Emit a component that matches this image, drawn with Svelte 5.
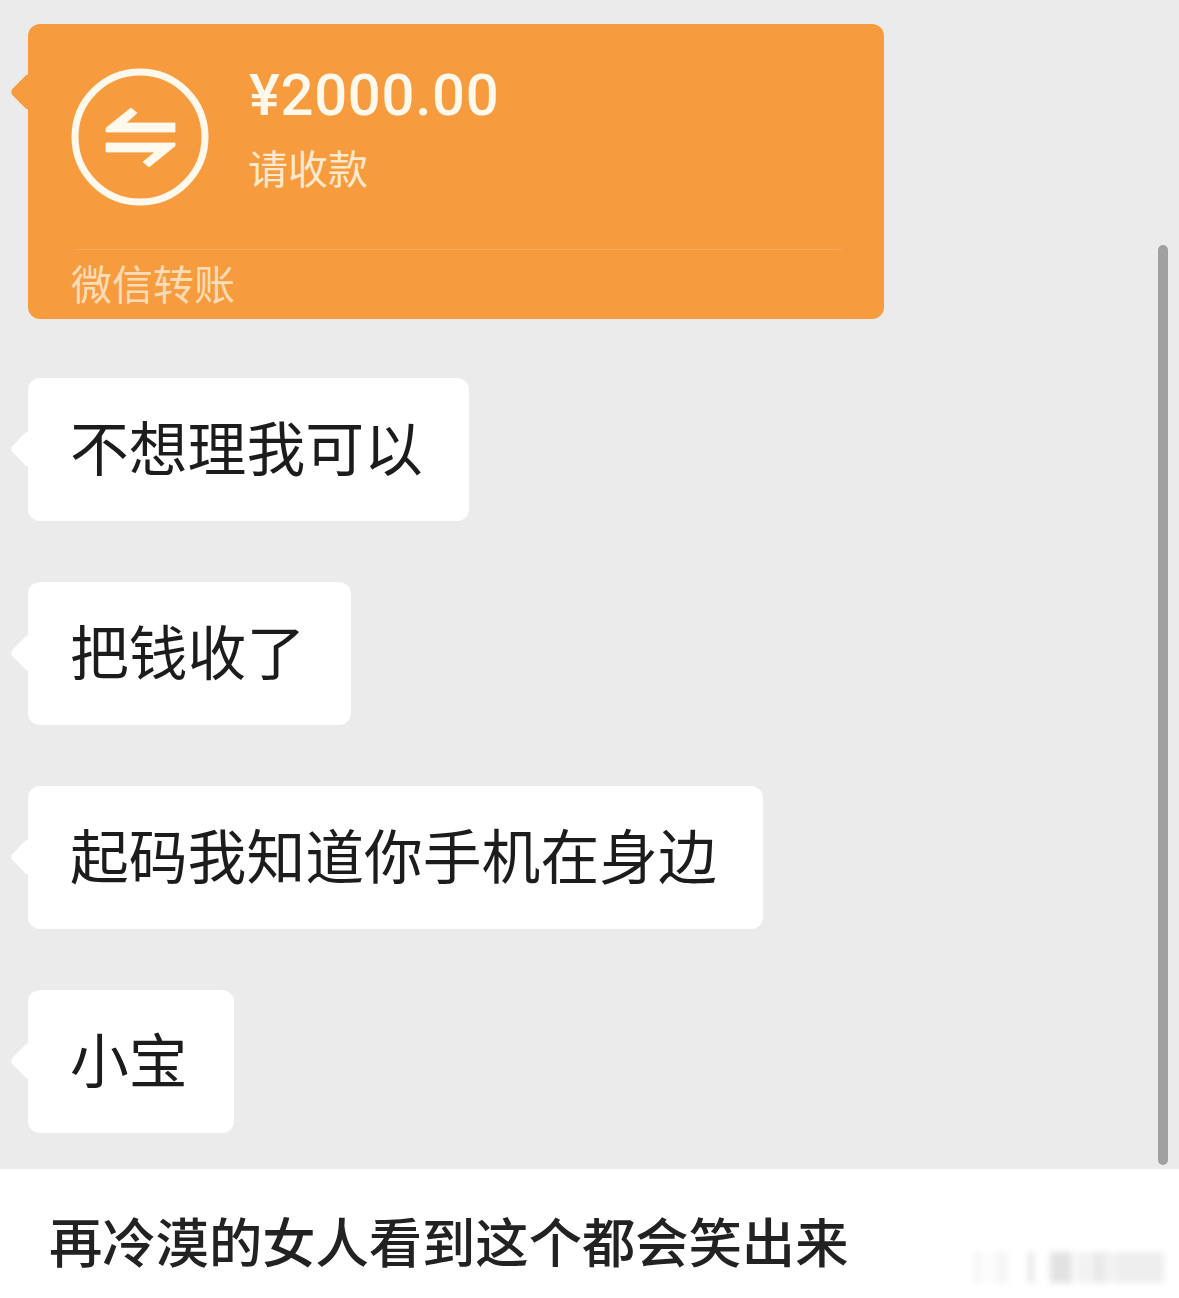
<script>
  const messages = ['不想理我可以', '把钱收了', '起码我知道你手机在身边', '小宝'];
</script>

<div class="page">
  <main class="chat">
    <article class="transfer">
      <div class="transfer-main">
        <svg class="transfer-icon" viewBox="0 0 138 138" aria-hidden="true">
          <circle cx="69" cy="69" r="65" fill="none" stroke="#fff8ec" stroke-width="7" />
          <path d="M35 64 L35 60 L60 40 L66 45 L55 55 L104 55 L104 64 Z" fill="#fff8ec" stroke="#fff8ec" stroke-width="0.8" stroke-linejoin="round" />
          <path d="M35 75 L104 75 L104 78 L78 99 L72 94 L84 84 L35 84 Z" fill="#fff8ec" stroke="#fff8ec" stroke-width="0.8" stroke-linejoin="round" />
        </svg>
        <div class="transfer-copy">
          <div class="amount">¥2000.00</div>
          <div class="status">请收款</div>
        </div>
      </div>
      <div class="transfer-foot">微信转账</div>
    </article>

    {#each messages as message}
      <div class="bubble">{message}</div>
    {/each}

    <div class="scrollbar"></div>
  </main>

  <footer class="caption">
    <span>再冷漠的女人看到这个都会笑出来</span>
    <div class="watermark" aria-hidden="true">
      <i class="w0"></i><i class="w1"></i><i class="w2"></i><i class="w3"></i><i class="w4"></i><i class="w5"></i><i class="w6"></i>
    </div>
  </footer>
</div>

<style>
  :global(body) {
    margin: 0;
    background: #fff;
  }

  .page {
    width: 1179px;
    height: 1298px;
    display: flex;
    flex-direction: column;
    overflow: hidden;
    font-family: "Noto Sans CJK SC", "Noto Sans", sans-serif;
  }

  .chat {
    position: relative;
    flex: none;
    height: 1169px;
    box-sizing: border-box;
    padding: 24px 0 0 28px;
    background: #ebebeb;
    display: flex;
    flex-direction: column;
    align-items: flex-start;
  }

  .transfer {
    position: relative;
    flex: none;
    width: 856px;
    height: 295px;
    box-sizing: border-box;
    margin-bottom: 59px;
    padding: 45px 42px 0 43px;
    border-radius: 12px;
    background: #f79c3e;
    display: flex;
    flex-direction: column;
  }

  .transfer::before,
  .bubble::before {
    content: "";
    position: absolute;
    left: -13px;
    width: 28px;
    height: 28px;
    border-radius: 5px;
    background: inherit;
    transform: rotate(45deg);
  }

  .transfer::before {
    top: 54px;
  }

  .transfer-main {
    height: 180px;
    flex: none;
    display: flex;
    align-items: flex-start;
    gap: 39px;
    border-bottom: 1px solid #faa856;
    margin-left: 4px;
  }

  .transfer-icon {
    width: 138px;
    height: 138px;
    margin-left: -4px;
    margin-top: -1px;
    flex: none;
  }

  .transfer-copy {
    margin-top: -6px;
    margin-left: 1px;
  }

  .amount {
    height: 64px;
    color: #fff8ec;
    font-family: Roboto, "Noto Sans", sans-serif;
    font-size: 58px;
    font-weight: 500;
    line-height: 64px;
    letter-spacing: 0.7px;
    white-space: nowrap;
  }

  .status {
    margin-top: 14px;
    margin-left: -1px;
    color: #fde9cf;
    font-size: 40px;
    line-height: 52px;
  }

  .transfer-foot {
    margin-top: 7px;
    color: #fcdcb6;
    font-size: 41px;
    line-height: 50px;
  }

  .bubble {
    position: relative;
    flex: none;
    height: 143px;
    box-sizing: border-box;
    margin-bottom: 61px;
    padding: 0 46px 0 42px;
    border-radius: 12px;
    background: #fff;
    color: #1c1c1c;
    font-size: 58.8px;
    line-height: 135px;
    white-space: nowrap;
  }

  .bubble::before {
    top: 57px;
  }

  .scrollbar {
    position: absolute;
    top: 245px;
    left: 1158px;
    width: 10px;
    height: 920px;
    border-radius: 5px;
    background: #a0a0a0;
  }

  .caption {
    position: relative;
    flex: 1;
    background: #fff;
    padding-left: 49px;
    color: #222;
    font-size: 53.3px;
    font-weight: 500;
    line-height: 142px;
    white-space: nowrap;
  }

  .watermark {
    position: absolute;
    left: 970px;
    top: 81px;
    width: 198px;
    height: 35px;
    filter: blur(3px);
  }

  .watermark i {
    position: absolute;
    display: block;
    top: 2px;
    height: 31px;
    background: #ececec;
  }

  .w0 { left: 4px; width: 34px; background: #f6f6f6 !important; }
  .w1 { left: 10px; width: 16px; background: #fcfcfc !important; }
  .w2 { left: 58px; width: 6px; background: #e8e8e8 !important; }
  .w3 { left: 80px; width: 22px; background: #e2e2e2 !important; }
  .w4 { left: 106px; width: 44px; background: #f2f2f2 !important; }
  .w5 { left: 124px; width: 10px; background: #e8e8e8 !important; }
  .w6 { left: 148px; width: 46px; background: #eeeeee !important; }
</style>
